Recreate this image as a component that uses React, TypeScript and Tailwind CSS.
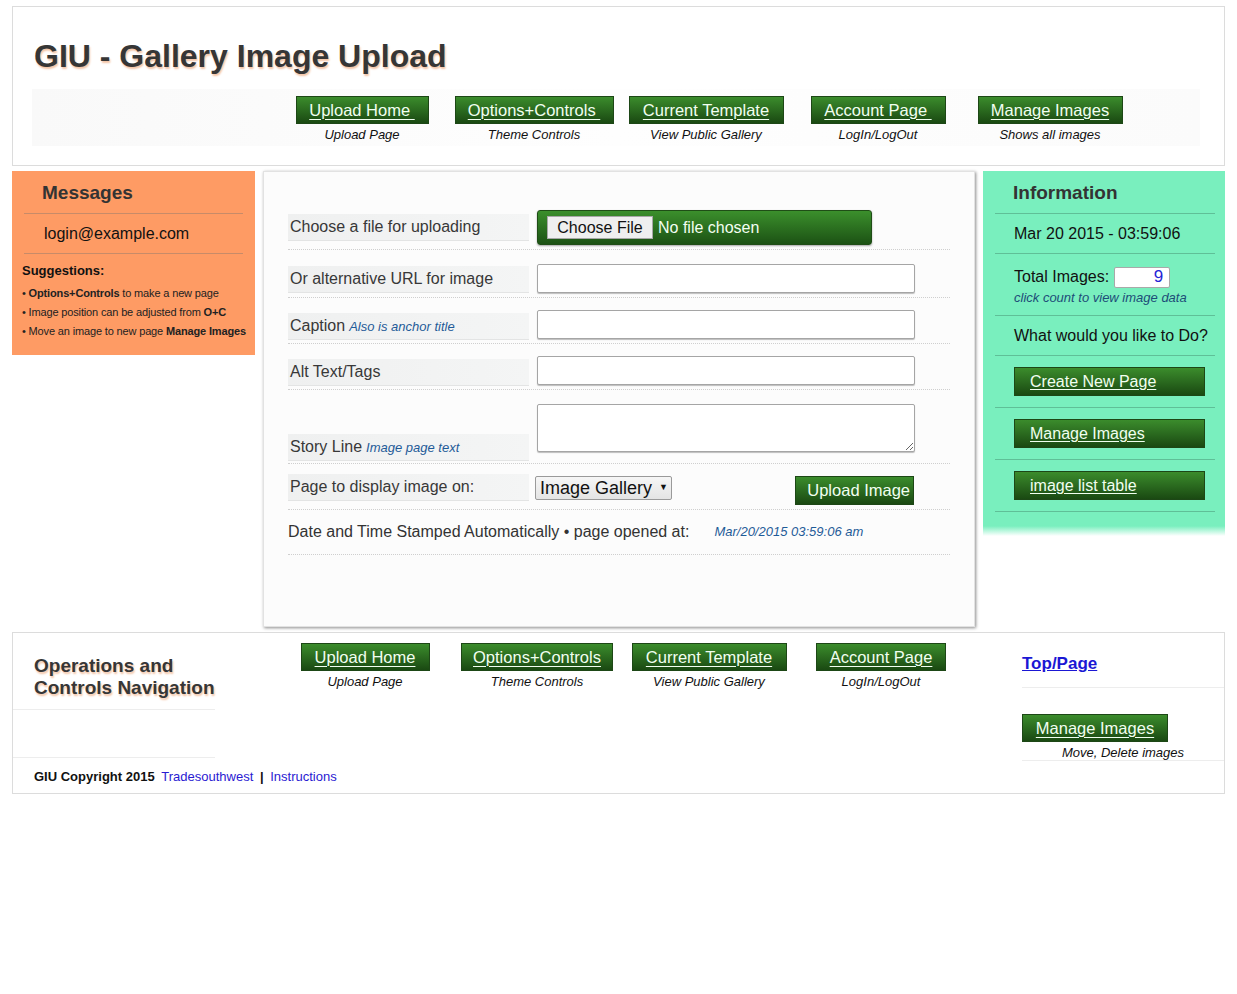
import React from 'react';

const TOP_NAV = [
  { label: 'Upload Home\u00a0', caption: 'Upload Page', w: 'w-[133px]' },
  { label: 'Options+Controls\u00a0', caption: 'Theme Controls', w: 'w-[159px]' },
  { label: 'Current Template', caption: 'View Public Gallery', w: 'w-[155px]' },
  { label: 'Account Page\u00a0', caption: 'LogIn/LogOut', w: 'w-[135px]' },
  { label: 'Manage Images', caption: 'Shows all images', w: 'w-[145px]' },
];

const FOOT_NAV = [
  { label: 'Upload Home', caption: 'Upload Page', w: 'w-[129px]' },
  { label: 'Options+Controls', caption: 'Theme Controls', w: 'w-[152px]' },
  { label: 'Current Template', caption: 'View Public Gallery', w: 'w-[155px]' },
  { label: 'Account Page', caption: 'LogIn/LogOut', w: 'w-[130px]' },
];

function GreenButton({ label, w }: { label: string; w: string }) {
  return (
    <a
      className={`${w} flex h-[28px] items-center justify-center border border-[#1d4716] bg-[linear-gradient(to_bottom,#3b8c2c,#1a4912)] text-[16.5px] whitespace-pre text-[#f1fff0] underline decoration-1 underline-offset-[3px]`}
    >
      {label}
    </a>
  );
}

function NavItem({ label, caption, w }: { label: string; caption: string; w: string }) {
  return (
    <div className="flex w-[172px] flex-col items-center">
      <GreenButton label={label} w={w} />
      <p className="mt-[3px] text-[13px] leading-4 italic text-[#111]">{caption}</p>
    </div>
  );
}

function SideButton({ label }: { label: string }) {
  return (
    <a className="flex h-[29px] w-[191px] items-center border border-[#1d4716] bg-[linear-gradient(to_bottom,#3b8c2c,#1a4912)] pl-[15px] text-[16px] text-[#f1fff0] underline decoration-1 underline-offset-2">
      {label}
    </a>
  );
}

function FieldLabel({ children, className = '' }: { children: React.ReactNode; className?: string }) {
  return (
    <div
      className={`flex h-[27px] w-[241px] shrink-0 items-center border-b border-[#e3e4e4] bg-[linear-gradient(to_right,#eff0f0,#f4f5f5)] pl-[2px] text-[16px] whitespace-nowrap text-[#383838] ${className}`}
    >
      {children}
    </div>
  );
}

const inputCls =
  'h-[29px] w-[378px] rounded-[2px] border border-[#a5a5a5] bg-white shadow-[0_1px_1px_rgba(0,0,0,0.25)]';

export default function App() {
  return (
    <div className="min-h-[994px] bg-white px-[12px] pt-[6px] font-['Liberation_Sans',Arial,sans-serif] text-[#222]">
      {/* header */}
      <header className="border border-[#dcdcdc] bg-white pb-[19px]">
        <h1 className="pt-[31px] pl-[21px] text-[32px] leading-[37px] font-bold text-[#363636] [text-shadow:1px_2px_2px_#f3c3a4]">
          GIU - Gallery Image Upload
        </h1>
        <nav className="mt-[14px] mr-[24px] ml-[19px] h-[57px] bg-[linear-gradient(to_right,#f9f9f9,#fefefe_50%,#fbfbfb)] pt-[7px] pl-[244px]">
          <div className="flex">
            {TOP_NAV.map((n) => (
              <NavItem key={n.caption} {...n} />
            ))}
          </div>
        </nav>
      </header>

      {/* columns */}
      <div className="mt-[5px] flex items-start gap-[8px]">
        {/* messages */}
        <aside className="w-[243px] shrink-0 bg-[#fe9b64] pb-[14px]">
          <div className="mx-[12px]">
            <h2 className="flex h-[43px] items-center border-b border-[#c78b69] pt-[2px] pl-[18px] text-[19px] font-bold text-[#333]">
              Messages
            </h2>
            <p className="flex h-[40px] items-center border-b border-[#c78b69] pl-[20px] text-[16px] text-[#111]">
              login@example.com
            </p>
          </div>
          <div className="px-[10px] pt-[9px]">
            <p className="text-[13px] leading-4 font-bold text-[#111]">Suggestions:</p>
            <ul className="mt-[5px] text-[11px] leading-[19px] tracking-[-0.15px] whitespace-nowrap text-[#222]">
              <li>
                • <b>Options+Controls</b> to make a new page
              </li>
              <li>
                • Image position can be adjusted from <b>O+C</b>
              </li>
              <li>
                • Move an image to new page <b>Manage Images</b>
              </li>
            </ul>
          </div>
        </aside>

        {/* form */}
        <main className="h-[456px] w-[712px] shrink-0 border border-[#e2e2e2] bg-[#fcfcfc] px-[24px] pt-[29px] shadow-[1px_1px_3px_rgba(0,0,0,0.45)]">
          <div className="flex h-[49px] items-end gap-[8px] border-b border-dotted border-[#cfcfcf] pb-[4px]">
            <FieldLabel className="mb-[4px]">Choose a file for uploading</FieldLabel>
            <div className="flex h-[35px] w-[335px] items-center rounded-[3px] border border-[#1f4d16] bg-[linear-gradient(to_bottom,#3b8f2c,#1c5214)] pl-[9px] shadow-[0_1px_2px_rgba(0,0,0,0.35)]">
              <span className="flex h-[23px] w-[106px] items-center justify-center border border-[#a7a7a7] bg-[#efefef] text-[16px] text-[#111]">
                Choose File
              </span>
              <span className="ml-[5px] text-[16px] text-[#f4fff2]">No file chosen</span>
            </div>
          </div>

          <div className="flex h-[48px] items-end gap-[8px] border-b border-dotted border-[#cfcfcf] pb-[4px]">
            <FieldLabel>Or alternative URL for image</FieldLabel>
            <div className={inputCls} />
          </div>

          <div className="flex h-[46px] items-end gap-[8px] border-b border-dotted border-[#cfcfcf] pb-[3px]">
            <FieldLabel>
              Caption
              <i className="ml-[4px] pt-[2px] text-[13px] text-[#1f5b98]">Also is anchor title</i>
            </FieldLabel>
            <div className={`${inputCls} mb-[1px]`} />
          </div>

          <div className="flex h-[46px] items-end gap-[8px] border-b border-dotted border-[#cfcfcf] pb-[3px]">
            <FieldLabel>Alt Text/Tags</FieldLabel>
            <div className={`${inputCls} mb-[1px]`} />
          </div>

          <div className="flex h-[74px] items-end gap-[8px] border-b border-dotted border-[#cfcfcf] pb-[2px]">
            <FieldLabel className="h-[25px]">
              Story Line
              <i className="ml-[4px] pt-[2px] text-[13px] text-[#1f5b98]">Image page text</i>
            </FieldLabel>
            <textarea
              readOnly
              className="mb-[9px] h-[48px] w-[378px] rounded-[2px] border border-[#a5a5a5] bg-white shadow-[0_1px_1px_rgba(0,0,0,0.25)] outline-none"
            />
          </div>

          <div className="flex h-[46px] items-end border-b border-dotted border-[#cfcfcf] pb-[4px]">
            <FieldLabel className="mb-[4px] h-[24px]">Page to display image on:</FieldLabel>
            <div className="mb-[5px] ml-[6px] flex h-[24px] w-[137px] items-center rounded-[2px] border border-[#9a9a9a] bg-[linear-gradient(to_bottom,#f6f6f6,#e4e4e4)] pl-[4px] text-[18px] whitespace-nowrap text-[#111]">
              Image Gallery
              <span className="ml-[7px] text-[9px]">▼</span>
            </div>
            <a className="mr-[36px] ml-auto flex h-[29px] w-[119px] items-center justify-end border border-[#1d4716] bg-[linear-gradient(to_bottom,#3b8c2c,#1a4912)] pr-[3px] text-[16.5px] whitespace-nowrap text-[#f1fff0]">
              Upload Image
            </a>
          </div>

          <div className="flex h-[45px] items-center border-b border-dotted border-[#cfcfcf]">
            <span className="text-[16px] whitespace-nowrap text-[#333]">
              Date and Time Stamped Automatically • page opened at:
            </span>
            <i className="ml-[25px] text-[13px] text-[#1f5b98]">Mar/20/2015 03:59:06 am</i>
          </div>
        </main>

        {/* information */}
        <aside className="w-[242px] shrink-0">
          <div className="bg-[#79efbe] pb-[14px]">
            <div className="mr-[10px] ml-[12px]">
              <h2 className="flex h-[43px] items-center border-b border-[#5fbf97] pt-[2px] pl-[18px] text-[19px] font-bold text-[#333]">
                Information
              </h2>
              <p className="flex h-[40px] items-center border-b border-[#5fbf97] pl-[19px] text-[16px] text-[#111]">
                Mar 20 2015 - 03:59:06
              </p>
              <div className="h-[62px] border-b border-[#5fbf97] pt-[12px] pl-[19px]">
                <div className="flex items-center text-[16px] leading-[22px] text-[#111]">
                  Total Images:
                  <span className="ml-[5px] flex h-[21px] w-[56px] items-center justify-end rounded-[2px] border border-[#a9a9a9] bg-white pr-[6px] text-[17px] text-[#2424d6]">
                    9
                  </span>
                </div>
                <p className="mt-[2px] text-[13px] leading-4 italic whitespace-nowrap text-[#1d4d78]">
                  click count to view image data
                </p>
              </div>
              <p className="flex h-[40px] items-center border-b border-[#5fbf97] pl-[19px] text-[16px] whitespace-nowrap text-[#111]">
                What would you like to Do?
              </p>
              {['Create New Page', 'Manage Images', 'image list table'].map((b) => (
                <div key={b} className="flex h-[52px] items-center border-b border-[#5fbf97] pl-[19px]">
                  <SideButton label={b} />
                </div>
              ))}
            </div>
          </div>
          <div className="h-[10px] bg-[linear-gradient(to_bottom,#79efbe,#ffffff)]" />
        </aside>
      </div>

      {/* footer */}
      <footer className="mt-[5px] flex h-[162px] border border-[#dcdcdc] bg-white">
        <div className="w-[202px] shrink-0">
          <h3 className="border-b border-[#ededed] pt-[22px] pb-[10px] pl-[21px] text-[19px] leading-[22px] font-bold text-[#363636] [text-shadow:1px_2px_2px_#f3c3a4]">
            Operations and
            <br />
            Controls Navigation
          </h3>
          <div className="h-[48px] border-b border-[#ededed]" />
          <p className="pt-[11px] pl-[21px] text-[13px] leading-4 whitespace-nowrap text-[#111]">
            <b>GIU Copyright 2015</b> <a className="ml-[3px] text-[#2a1ad2]">Tradesouthwest</a>{' '}
            <b className="mx-[3px]">|</b> <a className="text-[#2a1ad2]">Instructions</a>
          </p>
        </div>
        <div className="flex pt-[10px] pl-[64px]">
          {FOOT_NAV.map((n) => (
            <NavItem key={n.caption} {...n} />
          ))}
        </div>
        <div className="ml-auto w-[202px] shrink-0">
          <div className="h-[55px] border-b border-[#ededed] pt-[18px]">
            <a className="text-[17px] font-bold text-[#1b17d4] underline">Top/Page</a>
          </div>
          <div className="mt-[26px] w-[146px]">
            <GreenButton label="Manage Images" w="w-[146px]" />
          </div>
          <p className="mt-[4px] border-b border-[#ededed] text-center text-[13px] leading-[14px] italic text-[#111]">
            Move, Delete images
          </p>
        </div>
      </footer>
    </div>
  );
}
